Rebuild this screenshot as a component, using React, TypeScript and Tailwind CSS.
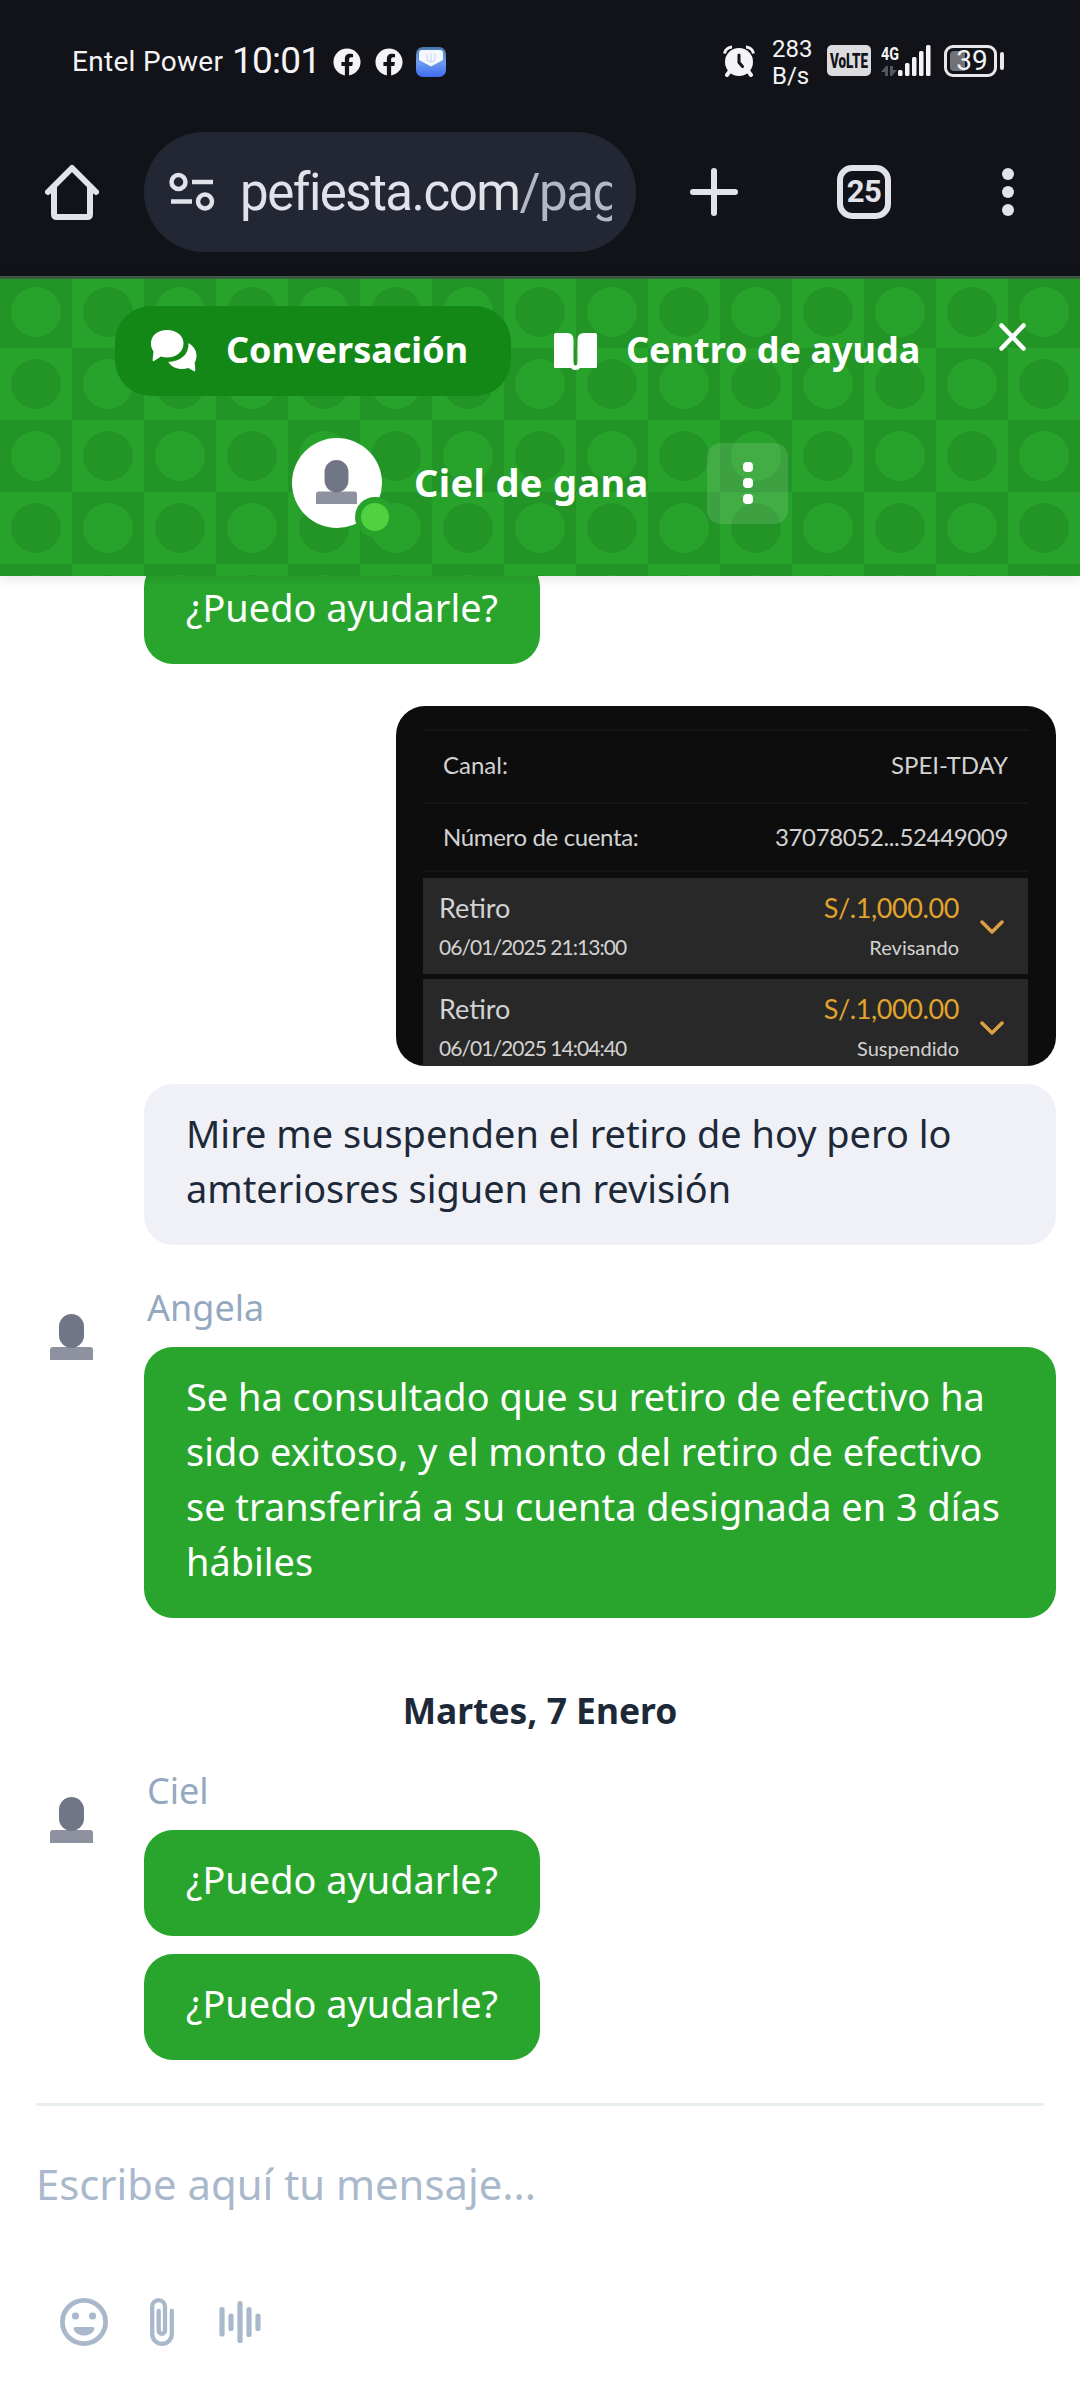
import type { ReactNode } from 'react';
import { FaFacebook } from 'react-icons/fa';

const movements = [
  { date: '06/01/2025 21:13:00', amount: 'S/.1,000.00', status: 'Revisando' },
  { date: '06/01/2025 14:04:40', amount: 'S/.1,000.00', status: 'Suspendido' },
];

function StatusBar() {
  return (
    <div className="h-[121px] flex items-center text-[#f4f4f6] font-[Roboto] pl-[72px] pr-[76px]">
      <span className="text-[28px] tracking-[0.3px] w-[160px] whitespace-nowrap mt-[2px]">Entel Power</span>
      <span className="text-[37px] tracking-[-0.8px] w-[101px] whitespace-nowrap">10:01</span>
      <FaFacebook className="w-7 h-7 mr-[14px] mt-[2px]" />
      <FaFacebook className="w-7 h-7 mr-[13px] mt-[2px]" />
      <MailIcon />
      <div className="ml-auto flex items-center">
        <AlarmIcon />
        <div className="ml-[17px] mt-[4px] w-[55px] text-[24px] leading-[27px] whitespace-nowrap">
          283
          <br />
          B/s
        </div>
        <svg width="44" height="31" viewBox="0 0 44 31">
          <rect width="44" height="31" rx="5" fill="#dcdcde" />
          <text x="3" y="23" fontSize="21" fontWeight="900" fontFamily="Roboto" textLength="38" lengthAdjust="spacingAndGlyphs" fill="#121318">
            VoLTE
          </text>
        </svg>
        <SignalIcon />
        <div className="ml-[13px] w-[53px] h-8 rounded-[9px] border-3 border-[#e8e8ea] p-[3px] flex relative">
          <div className="w-[15px] h-full bg-[#717277] rounded-l-[4px]" />
          <span className="absolute inset-0 flex items-center justify-center text-[28px] pl-[3px]">39</span>
        </div>
        <div className="ml-[3px] w-1 h-[18px] rounded-full bg-[#e8e8ea]" />
      </div>
    </div>
  );
}

function MailIcon() {
  return (
    <svg className="mt-[2px]" width="30" height="30" viewBox="0 0 30 30">
      <defs>
        <linearGradient id="mail" x1="0" y1="0" x2="0" y2="1">
          <stop offset="0" stopColor="#4a78ad" />
          <stop offset="0.5" stopColor="#6d9df0" />
          <stop offset="1" stopColor="#3f6cf0" />
        </linearGradient>
      </defs>
      <rect width="30" height="30" rx="7" fill="url(#mail)" />
      <path d="M3 6q0-3 3-3h18q3 0 3 3v7L15 19.500 3 13z" fill="#f4f8ff" />
      <path d="M11 7v4a4 4 0 0 0 8 0V7M15 6v9" fill="none" stroke="#c5d3ee" strokeWidth="1" />
    </svg>
  );
}

function AlarmIcon() {
  return (
    <svg width="32" height="32" viewBox="0 0 32 32">
      <path d="M1.500 8.500a8 8 0 0 1 7.500-6.500M30.500 8.500A8 8 0 0 0 23 2" stroke="#f4f4f6" strokeWidth="3" fill="none" />
      <path d="M7 26l-3 4M25 26l3 4" stroke="#f4f4f6" strokeWidth="4" strokeLinecap="round" />
      <circle cx="16" cy="17" r="14" fill="#f4f4f6" />
      <path d="M16 10v7.500l3.500 4" stroke="#121318" strokeWidth="3" fill="none" strokeLinecap="round" />
    </svg>
  );
}

function SignalIcon() {
  return (
    <svg className="ml-[10px]" width="50" height="32" viewBox="0 0 50 32" fill="#f4f4f6">
      <text x="0" y="15" fontSize="19" fontWeight="700" fontFamily="Roboto" textLength="18" lengthAdjust="spacingAndGlyphs">
        4G
      </text>
      <path d="M0 27l5-6h2v10H4v-4zM9 21h3v4h4l-5 6H9z" fill="#55565b" />
      <rect x="17" y="25" width="4.500" height="6" rx="1.500" />
      <rect x="24" y="18" width="4.500" height="13" rx="1.500" />
      <rect x="31" y="12" width="4.500" height="19" rx="1.500" />
      <rect x="38" y="6" width="4.500" height="25" rx="1.500" />
      <rect x="45" y="0" width="4.500" height="31" rx="1.500" />
    </svg>
  );
}

function BrowserBar() {
  return (
    <div className="h-[155px] pt-[11px] pl-[45px] pr-[66px] flex items-start text-[#e2e3ea]">
      <div className="flex items-center h-[120px] w-full">
        <svg width="54" height="56" viewBox="0 0 54 56" fill="none" stroke="currentColor" strokeWidth="6" strokeLinecap="round" strokeLinejoin="round">
          <path d="M3 28L27 4l24 24" />
          <path d="M9 23v27q0 3 3 3h30q3 0 3-3V23" />
        </svg>
        <div className="ml-[45px] w-[492px] h-[120px] rounded-full bg-[#222733] pl-[25px] pr-6 flex items-center">
          <svg className="shrink-0" width="46" height="40" viewBox="0 0 46 40" fill="none" stroke="currentColor" strokeWidth="4.500">
            <circle cx="9.500" cy="10" r="7" />
            <path d="M23 10h21M2 29.500h21" />
            <circle cx="36" cy="29.500" r="7" />
          </svg>
          <div className="ml-[25px] mt-[2px] flex-1 overflow-hidden whitespace-nowrap text-[51px] leading-[64px] font-[Roboto] tracking-[-1.500px]">
            pefiesta.com<span className="text-[#b4b8c4]">/pag</span>
          </div>
        </div>
        <svg className="ml-[54px]" width="48" height="48" viewBox="0 0 48 48" stroke="currentColor" strokeWidth="6" strokeLinecap="round">
          <path d="M24 3v42M3 24h42" />
        </svg>
        <div className="ml-[99px] w-[54px] h-[54px] rounded-[15px] border-6 border-[#e2e3ea] flex items-center justify-center font-[Roboto] font-bold text-[31px] tracking-[-0.500px]">
          25
        </div>
        <div className="ml-auto flex flex-col gap-[6px]">
          <i className="w-3 h-3 rounded-full bg-current" />
          <i className="w-3 h-3 rounded-full bg-current" />
          <i className="w-3 h-3 rounded-full bg-current" />
        </div>
      </div>
    </div>
  );
}

function Pattern() {
  return (
    <svg className="absolute inset-0 w-full h-full">
      <defs>
        <pattern id="checker" width="144" height="144" patternUnits="userSpaceOnUse">
          <rect width="144" height="144" fill="#27a22b" />
          <path d="M0 0h72v72H0zM72 72h72v72H72z" fill="#239527" />
          <circle cx="36" cy="36" r="25" fill="#27a22b" />
          <circle cx="108" cy="108" r="25" fill="#27a22b" />
          <circle cx="108" cy="36" r="25" fill="#239527" />
          <circle cx="36" cy="108" r="25" fill="#239527" />
        </pattern>
      </defs>
      <rect width="100%" height="100%" fill="url(#checker)" />
      <rect width="100%" height="3" fill="#3f5045" fillOpacity="0.85" />
    </svg>
  );
}

function CommentsIcon() {
  return (
    <svg width="46" height="42" viewBox="0 0 46 42" fill="white">
      <path d="M16 0c9.500 0 16.500 5.500 16.500 13.500S25.500 27.500 16 27.500c-2 0-4-.3-6-1L3 31c-.8.500-1.500 0-1.400-1L2.500 21.500C.8 19.200 0 16.500 0 13.500 0 5.500 6.500 0 16 0z" />
      <path d="M37.500 13c5 3 8 7.500 8 12.500 0 2.500-.6 5-1.800 7l.6 7.500c.1 1.200-.6 1.600-1.600 1l-5.500-3c-2 .6-4 .9-6 .9-6 0-11-2.500-14-7C29 31.500 38 25 37.500 13z" />
    </svg>
  );
}

function BookIcon() {
  return (
    <svg width="43" height="37" viewBox="0 0 43 37" fill="white">
      <path d="M2 0h11q6.500 0 6.500 7v26q-1-2-4-2H2q-2 0-2-2V2q0-2 2-2z" />
      <path d="M41 0H30q-6.500 0-6.500 7v26q1-2 4-2H41q2 0 2-2V2q0-2-2-2z" />
      <path d="M0 28h17q2.500 0 2.500 2.500a2 2 0 0 0 4 0Q23.500 28 26 28h17v5.500q0 1.500-1.500 1.500H26q-1 2-4.500 2T17 35H1.500Q0 35 0 33.500z" />
    </svg>
  );
}

function Person({ className }: { className: string }) {
  return (
    <svg className={className} viewBox="0 0 43 46">
      <path d="M0 46V36q0-3 3-3h37q3 0 3 3v10z" fill="#8e919f" />
      <rect x="9" y="0" width="25" height="34" rx="12.500" fill="#707686" />
    </svg>
  );
}

function ChatHeader() {
  return (
    <header className="relative z-10 h-[300px] shadow-[0_2px_12px_rgba(0,0,0,0.12)] text-white font-bold">
      <Pattern />
      <div className="relative flex pt-[30px] pl-[115px]">
        <div className="w-[396px] h-[90px] rounded-[36px] bg-[#148817] flex items-center pl-9">
          <CommentsIcon />
          <span className="ml-[29px] -mt-[3px] text-[36px] whitespace-nowrap">Conversación</span>
        </div>
        <div className="h-[90px] flex items-center ml-[43px]">
          <BookIcon />
          <span className="ml-[29px] -mt-[3px] text-[36px] whitespace-nowrap">Centro de ayuda</span>
        </div>
        <svg className="ml-auto mr-[54px] mt-[17px]" width="27" height="28" viewBox="0 0 27 28" stroke="white" strokeWidth="4.500" strokeLinecap="round">
          <path d="M2.500 2.500l22 23M24.500 2.500l-22 23" />
        </svg>
      </div>
      <div className="relative flex items-center pl-[292px] mt-[42px]">
        <div className="relative w-[90px] h-[90px] rounded-full bg-white">
          <Person className="absolute left-6 top-[22px] w-[41px] h-[44px]" />
          <i className="absolute left-[63px] top-[59px] w-10 h-10 rounded-full border-6 border-[#27a22b] bg-[#50d240]" />
        </div>
        <span className="ml-[32px] -mt-[2px] w-[293px] text-[38px] tracking-[0.350px] whitespace-nowrap">Ciel de gana</span>
        <div className="w-[81px] h-[81px] rounded-[14px] bg-white/12 flex flex-col items-center justify-center gap-[6px]">
          <i className="w-[10px] h-[10px] rounded-[4px] bg-white" />
          <i className="w-[10px] h-[10px] rounded-[4px] bg-white" />
          <i className="w-[10px] h-[10px] rounded-[4px] bg-white" />
        </div>
      </div>
    </header>
  );
}

function Bubble({ children }: { children: ReactNode }) {
  return (
    <div className="w-fit rounded-[29px] bg-[#29a52d] text-white px-[42px] pt-[22px] pb-[29px] text-[37.9px] leading-[55px]">
      {children}
    </div>
  );
}

function AgentGroup({ name, children }: { name: string; children: ReactNode }) {
  return (
    <div className="flex">
      <Person className="w-[43px] h-[46px] ml-[50px] mt-[31px] mr-[51px] shrink-0" />
      <div className="mr-6">
        <div className="h-16 pl-[3px] text-[36px] leading-[50px] text-[#94a9bf]">{name}</div>
        <div className="flex flex-col gap-[18px]">{children}</div>
      </div>
    </div>
  );
}

function Receipt() {
  return (
    <div className="ml-auto mr-6 w-[660px] h-[360px] rounded-[29px] bg-[#0d0d0d] overflow-hidden pt-[23px] pl-[27px] pr-[28px] font-[Lato] text-[#d2d2d2]">
      <div className="h-[73px] border-t-2 border-[#151515] px-5 flex items-center justify-between pb-1 text-[24px]">
        <span>Canal:</span>
        <span>SPEI-TDAY</span>
      </div>
      <div className="h-[70px] border-y-2 border-[#151515] px-5 flex items-center justify-between text-[24px] tracking-[-0.350px]">
        <span>Número de cuenta:</span>
        <span>37078052...52449009</span>
      </div>
      <div className="mt-[6px] flex flex-col gap-[5px]">
        {movements.map((m) => (
          <div key={m.date} className="h-[96px] shrink-0 bg-[#282828] flex pl-4 pr-6">
            <div>
              <div className="text-[27px] leading-[34px] mt-[13px]">Retiro</div>
              <div className="text-[21px] leading-[26px] mt-[9px] tracking-[-0.950px] whitespace-nowrap">{m.date}</div>
            </div>
            <div className="ml-auto text-right">
              <div className="text-[27px] leading-[34px] mt-[13px] tracking-[-0.400px] text-[#e0a32c]">{m.amount}</div>
              <div className="text-[20px] leading-[26px] mt-[9px]">{m.status}</div>
            </div>
            <svg className="ml-[21px] mt-[42px]" width="24" height="16" viewBox="0 0 24 16" fill="none" stroke="#dfa144" strokeWidth="3.500" strokeLinecap="round" strokeLinejoin="round">
              <path d="M2 2l10 10L22 2" />
            </svg>
          </div>
        ))}
      </div>
    </div>
  );
}

function Composer() {
  return (
    <div className="mx-9 mt-[43px] border-t-3 border-[#e8eeee]">
      <div className="mt-[48px] text-[41.8px] leading-[60px] text-[#a9b9cb]">Escribe aquí tu mensaje...</div>
      <div className="flex items-center mt-[84px] pl-6 text-[#a9b9cb]">
        <svg width="48" height="48" viewBox="0 0 48 48" fill="currentColor">
          <circle cx="24" cy="24" r="21.600" fill="none" stroke="currentColor" strokeWidth="4.800" />
          <circle cx="15.500" cy="18" r="3.600" />
          <circle cx="32.500" cy="18" r="3.600" />
          <path d="M15 29h18q1.500 0 1.500 2c-1 4-5.500 6.500-10.500 6.500S14.500 35 13.500 31q0-2 1.500-2z" />
        </svg>
        <svg className="ml-[42px]" width="24" height="48" viewBox="0 0 24 48" fill="none" stroke="currentColor" strokeWidth="4.300" strokeLinecap="round">
          <path d="M21.800 13v23a9.800 9.800 0 0 1-19.600 0V8.600a6.400 6.400 0 0 1 12.800 0v24a3.150 3.150 0 0 1-6.300 0V13" />
        </svg>
        <svg className="ml-[45px]" width="42" height="42" viewBox="0 0 42 42" stroke="currentColor" strokeWidth="5.200" strokeLinecap="round">
          <path d="M3 8.500v24.500M12 15v12.500M21 2.600v36.800M30 8.500v25M39 15v12.500" />
        </svg>
      </div>
    </div>
  );
}

export default function App() {
  return (
    <div className="w-[1080px] h-[2388px] bg-white overflow-hidden font-['Noto_Sans',sans-serif]">
      <div className="bg-[#121318]">
        <StatusBar />
        <BrowserBar />
      </div>
      <ChatHeader />
      <main>
        <div className="ml-36 -mt-[18px]">
          <Bubble>¿Puedo ayudarle?</Bubble>
        </div>
        <div className="mt-[42px]">
          <Receipt />
        </div>
        <div className="ml-36 mr-6 mt-[18px] rounded-[29px] bg-[#eff1f6] text-[#1d2939] px-[42px] pt-[22px] pb-[29px] text-[37.9px] leading-[55px]">
          Mire me suspenden el retiro de hoy pero lo amteriosres siguen en revisión
        </div>
        <div className="mt-[38px]">
          <AgentGroup name="Angela">
            <Bubble>
              Se ha consultado que su retiro de efectivo ha sido exitoso, y el monto del retiro de efectivo se
              transferirá a su cuenta designada en 3 días hábiles
            </Bubble>
          </AgentGroup>
        </div>
        <div className="mt-[67px] text-center text-[35.4px] leading-[50px] font-bold text-[#1d2939]">Martes, 7 Enero</div>
        <div className="mt-[31px]">
          <AgentGroup name="Ciel">
            <Bubble>¿Puedo ayudarle?</Bubble>
            <Bubble>¿Puedo ayudarle?</Bubble>
          </AgentGroup>
        </div>
      </main>
      <Composer />
    </div>
  );
}
